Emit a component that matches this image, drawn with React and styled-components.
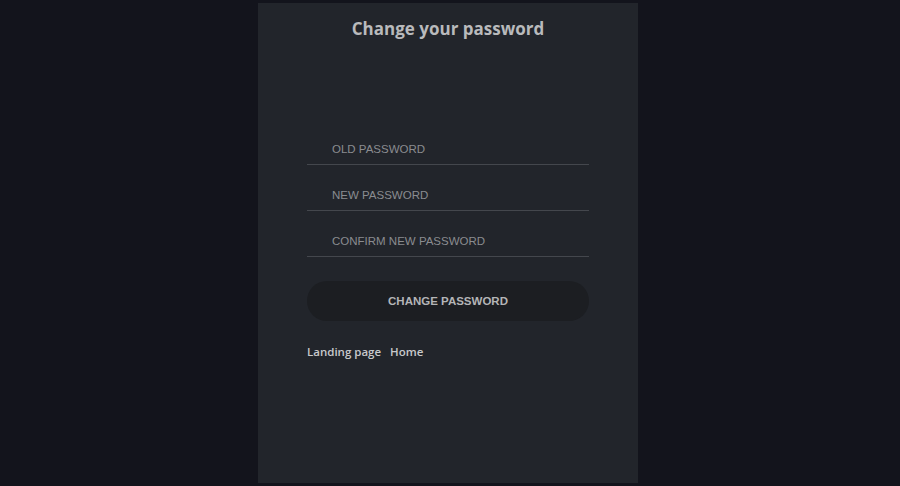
import React from "react";
import styled, { createGlobalStyle } from "styled-components";

const GlobalStyle = createGlobalStyle`
  html, body {
    margin: 0;
    padding: 0;
    background: #13141c;
  }
`;

const Page = styled.div`
  width: 900px;
  height: 486px;
  display: flex;
  justify-content: center;
  padding-top: 3px;
  box-sizing: border-box;
  background: #13141c;
`;

const Panel = styled.div`
  width: 380px;
  height: 480px;
  margin-left: -4px;
  background: #22252b;
  display: flex;
  flex-direction: column;
  align-items: center;
  box-sizing: border-box;
`;

const Title = styled.h1`
  margin: 14px 0 0;
  font-family: "Open Sans", sans-serif;
  font-weight: 700;
  font-size: 17px;
  line-height: 24px;
  color: #b9babc;
`;

const Form = styled.form`
  width: 282px;
  margin-top: 78px;
  display: flex;
  flex-direction: column;
`;

const Field = styled.input`
  height: 46px;
  padding: 14px 0 0 25px;
  margin: 0;
  border: 0;
  border-bottom: 1px solid #44474d;
  background: transparent;
  font-family: "Liberation Sans", Arial, sans-serif;
  font-size: 11.5px;
  color: #ccc;
  outline: none;
  box-sizing: border-box;

  &::placeholder {
    color: #8a8c90;
  }
`;

const Button = styled.button`
  margin-top: 24px;
  height: 40px;
  border: 0;
  border-radius: 20px;
  background: #1c1e22;
  color: #b4b5b7;
  font-family: "Liberation Sans", Arial, sans-serif;
  font-size: 11.5px;
  font-weight: 700;
  cursor: pointer;
`;

const Links = styled.div`
  width: 282px;
  margin-top: 23px;
  display: flex;
  gap: 9px;
`;

const Link = styled.a`
  font-family: "Open Sans", sans-serif;
  font-size: 11.5px;
  font-weight: 600;
  color: #c8c9cb;
  text-decoration: none;
`;

export default function App() {
  return (
    <>
      <GlobalStyle />
      <Page>
        <Panel>
          <Title>Change your password</Title>
          <Form onSubmit={(e) => e.preventDefault()}>
            <Field type="password" placeholder="OLD PASSWORD" />
            <Field type="password" placeholder="NEW PASSWORD" />
            <Field type="password" placeholder="CONFIRM NEW PASSWORD" />
            <Button type="submit">CHANGE PASSWORD</Button>
          </Form>
          <Links>
            <Link href="#">Landing page</Link>
            <Link href="#">Home</Link>
          </Links>
        </Panel>
      </Page>
    </>
  );
}
